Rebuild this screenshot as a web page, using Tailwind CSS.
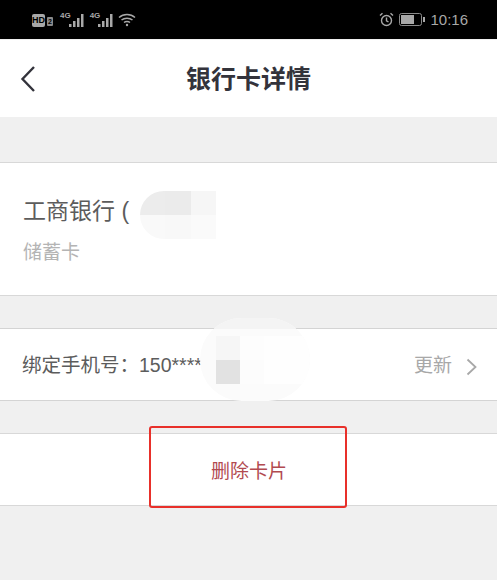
<!DOCTYPE html>
<html lang="zh-CN">
<head>
    <meta charset="UTF-8">
    <meta name="viewport" content="width=device-width, initial-scale=1.0">
    <title>银行卡详情</title>
    <script src="https://cdn.jsdelivr.net/npm/@tailwindcss/browser@4"></script>
</head>
<body class="bg-[#f0f0f0] h-[580px] w-[497px] overflow-hidden font-['Liberation_Sans','Noto_Sans_CJK_SC',sans-serif]">
    <!-- Status bar -->
    <div class="h-[39px] bg-black flex items-center justify-between pl-[32px] pr-[29px] text-[#a8a8a8]">
        <div class="flex items-center mt-[1px]">
            <span class="w-[13px] h-[13px] bg-[#a8a8a8] rounded-[2px] text-black text-[9px] leading-[13px] font-bold text-center">HD</span>
            <span class="ml-[2px] w-[6px] h-[9px] mt-[3px] bg-[#8a8a8a] rounded-[1px] text-black text-[7px] leading-[9px] font-bold text-center">2</span>
            <span class="ml-[7px] text-[8px] leading-none font-bold self-start -mt-[1px]">4G</span>
            <svg class="ml-[-3px]" width="18" height="15" viewBox="0 0 18 15" fill="#a8a8a8"><rect x="1" y="11" width="2.500" height="3"/><rect x="5" y="8" width="2.500" height="6"/><rect x="9" y="5" width="2.500" height="9"/><rect x="13" y="1" width="2.500" height="13"/></svg>
            <span class="ml-[4px] text-[8px] leading-none font-bold self-start -mt-[1px]">4G</span>
            <svg class="ml-[-3px]" width="18" height="15" viewBox="0 0 18 15" fill="#a8a8a8"><rect x="1" y="11" width="2.500" height="3"/><rect x="5" y="8" width="2.500" height="6"/><rect x="9" y="5" width="2.500" height="9"/><rect x="13" y="1" width="2.500" height="13"/></svg>
            <svg class="ml-[3px]" width="18" height="14" viewBox="0 0 18 14" fill="none" stroke="#a8a8a8" stroke-width="1.500"><path d="M1 4.500C5.500 .5 12.500 .5 17 4.500"/><path d="M3.500 7C6.500 4.500 11.500 4.500 14.500 7"/><path d="M6 9.500C7.500 8.300 10.500 8.300 12 9.500"/><circle cx="9" cy="12" r="1.200" fill="#a8a8a8" stroke="none"/></svg>
        </div>
        <div class="flex items-center">
            <svg width="15" height="15" viewBox="0 0 15 15" fill="none" stroke="#a8a8a8" stroke-width="1.400"><circle cx="7.500" cy="8.500" r="5"/><path d="M7.500 5.500V8.800L9.500 10"/><path d="M1 3.500L3.500 1.200M14 3.500L11.500 1.200"/></svg>
            <svg class="ml-[5px]" width="27" height="13" viewBox="0 0 27 13"><rect x=".5" y=".5" width="22" height="12" rx="2" fill="none" stroke="#8a8a8a"/><rect x="2" y="2" width="13" height="9" fill="#a8a8a8"/><rect x="24" y="4" width="2" height="5" fill="#a8a8a8"/></svg>
            <span class="ml-[4px] text-[15px] leading-none">10:16</span>
        </div>
    </div>

    <!-- Header -->
    <header class="relative mt-[1px] h-[77px] bg-white flex items-center justify-center">
        <svg class="absolute left-[20px] top-[25px]" width="16" height="28" viewBox="0 0 16 28" fill="none" stroke="#33333b" stroke-width="2.400"><path d="M14 2L2.500 14L14 26"/></svg>
        <h1 class="text-[25px] font-bold text-[#33333b] mt-[2px]">银行卡详情</h1>
    </header>

    <!-- Card info -->
    <section class="relative mt-[45px] h-[134px] bg-white border-y border-[#d8d8d8] pl-[23px] pt-[32px]">
        <div class="text-[23px] leading-[32px] text-[#5c5c5c]">工商银行 (</div>
        <div class="mt-[14px] text-[19px] leading-[24px] text-[#b4b4b4]">储蓄卡</div>
        <!-- mosaic over the card number -->
        <div class="absolute left-[140px] top-[28px] w-[76px] h-[48px] rounded-l-[24px] overflow-hidden grid grid-cols-3 grid-rows-2">
            <div class="bg-[#ececec]"></div><div class="bg-[#ebebeb]"></div><div class="bg-[#f6f6f6]"></div>
            <div class="bg-[#f9f9f9]"></div><div class="bg-[#f8f8f8]"></div><div class="bg-[#fafafa]"></div>
        </div>
    </section>

    <!-- Phone row -->
    <section class="relative mt-[32px] h-[73px] bg-white border-y border-[#d4d4d4] pl-[22px] pr-[20px] pt-[2px] flex items-center justify-between">
        <div class="text-[19.500px] text-[#5c5c5c]">绑定手机号：150****</div>
        <div class="flex items-center pt-[2px]">
            <span class="text-[19px] text-[#a8a8a8]">更新</span>
            <svg class="ml-[14px]" width="11" height="18" viewBox="0 0 11 18" fill="none" stroke="#a8a8a8" stroke-width="1.800"><path d="M1.500 1.500L9.500 9L1.500 16.500"/></svg>
        </div>
        <!-- mosaic over the phone number -->
        <div class="absolute left-[200px] -top-[11px] w-[110px] h-[83px] rounded-full overflow-hidden bg-[#fbfbfb] grid grid-cols-[16px_24px_24px_1fr] grid-rows-[11px_7px_24px_24px_1fr]">
            <div class="col-span-4 bg-[#f4f4f4]"></div>
            <div></div><div></div><div></div><div></div>
            <div></div><div class="bg-[#f6f6f6]"></div><div class="bg-[#fdfdfd]"></div><div class="bg-[#fefefe]"></div>
            <div></div><div class="bg-[#e2e2e2]"></div><div class="bg-[#fcfcfc]"></div><div class="bg-[#fefefe]"></div>
            <div></div><div></div><div></div><div></div>
        </div>
    </section>

    <!-- Delete row -->
    <section class="relative mt-[32px] h-[73px] bg-white border-y border-[#d8d8d8] pt-[5px] flex items-center">
        <span class="ml-[211px] text-[19px] text-[#b24a50]">删除卡片</span>
        <!-- red annotation box -->
        <div class="absolute left-[149px] -top-[8px] w-[198px] h-[82px] border-2 border-[#e8302a] rounded-[3px]"></div>
    </section>
</body>
</html>
